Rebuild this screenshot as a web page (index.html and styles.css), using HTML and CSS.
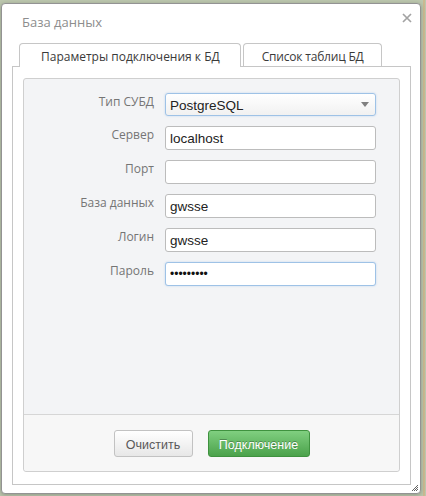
FILE: index.html
```html
<!DOCTYPE html>
<html lang="ru">
<head>
<meta charset="utf-8">
<title>База данных</title>
<link rel="stylesheet" href="styles.css">
</head>
<body>
<div class="dialog">
  <div class="dialog-header">
    <div class="dialog-title">База данных</div>
    <svg class="close" width="10" height="10" viewBox="0 0 10 10"><path d="M1 1L9 9M9 1L1 9" stroke="#a3a3a3" stroke-width="1.7" fill="none"/></svg>
  </div>
  <div class="tabs">
    <div class="tab active">Параметры подключения к БД</div>
    <div class="tab narrow">Список таблиц БД</div>
  </div>
  <div class="tab-panel">
    <div class="box">
      <div class="form">
        <label class="label">Тип СУБД</label>
        <div class="field select focused"><span>PostgreSQL</span><svg width="8" height="5" viewBox="0 0 8 5"><path d="M0 0H8L4 5Z" fill="#808080"/></svg></div>
        <label class="label">Сервер</label>
        <input class="field" type="text" value="localhost">
        <label class="label">Порт</label>
        <input class="field" type="text" value="">
        <label class="label">База данных</label>
        <input class="field" type="text" value="gwsse">
        <label class="label">Логин</label>
        <input class="field" type="text" value="gwsse">
        <label class="label">Пароль</label>
        <input class="field password focused" type="password" value="123456789">
      </div>
      <div class="footer">
        <button class="btn btn-default">Очистить</button>
        <button class="btn btn-success">Подключение</button>
      </div>
    </div>
  </div>
  <svg class="grip" width="8" height="8" viewBox="0 0 8 8"><path d="M7 1L1 7M7 3L3 7M7 5L5 7" stroke="#666" stroke-width="1" fill="none"/></svg>
</div>
</body>
</html>
```
FILE: styles.css
```css
html, body {
  margin: 0;
  padding: 0;
}
body {
  width: 426px;
  height: 496px;
  overflow: hidden;
  background:
    linear-gradient(90deg, rgba(230,160,90,0.35) 0 2px, transparent 2px 100%) 423px 0 / 3px 496px no-repeat,
    #bcc7ae;
  font-family: "Open Sans", "DejaVu Sans", sans-serif;
}
.dialog {
  position: relative;
  box-sizing: border-box;
  width: 420px;
  height: 491px;
  margin: 3px 0 0 1px;
  background: #fff;
  border: 1px solid #939393;
  border-radius: 4px;
  box-shadow: 0 1px 4px rgba(0,0,0,0.25);
  display: flex;
  flex-direction: column;
}
.dialog-header {
  height: 39px;
  box-sizing: border-box;
  display: flex;
  justify-content: space-between;
  align-items: flex-start;
  padding: 0 8px 0 20px;
}
.dialog-title {
  padding-top: 9px;
  font-size: 13px;
  line-height: 18px;
  color: #8d8d8d;
}
.close {
  margin-top: 9px;
}
.tabs {
  display: flex;
  align-items: flex-end;
  gap: 2px;
  margin: 0 10px;
  padding-left: 7px;
  height: 23px;
}
.tab {
  box-sizing: border-box;
  height: 23px;
  padding: 3px 21px 0;
  line-height: 19px;
  font-size: 12px;
  color: #3a3a3a;
  background: #fff;
  border: 1px solid #c6c6c6;
  border-bottom: none;
  border-radius: 4px 4px 0 0;
}
.tab.narrow {
  padding-left: 18px;
  padding-right: 17px;
  letter-spacing: -0.2px;
}
.tab.active {
  position: relative;
  z-index: 1;
  height: 24px;
  margin-bottom: -1px;
  padding-left: 21px;
  padding-right: 20px;
}
.tab-panel {
  flex: 1;
  margin: 0 9px 8px 10px;
  border: 1px solid #c6c6c6;
  display: flex;
  flex-direction: column;
}
.box {
  flex: 1;
  margin: 11px 10px 12px 10px;
  border: 1px solid #cfcfcf;
  border-radius: 3px;
  background: #f3f4f6;
  display: flex;
  flex-direction: column;
}
.form {
  flex: 1;
  display: grid;
  grid-template-columns: 130px 211px;
  column-gap: 11px;
  row-gap: 10px;
  align-content: start;
  padding-top: 14px;
}
.label {
  text-align: right;
  font-size: 12px;
  line-height: 16px;
  padding-top: 1px;
  color: #757575;
}
.field {
  box-sizing: border-box;
  height: 24px;
  width: 211px;
  margin: 0;
  padding: 0 4px;
  border: 1px solid #bcbcbc;
  border-radius: 3px;
  background: #fff;
  font-family: "Liberation Sans", Arial, sans-serif;
  font-size: 13.5px;
  color: #222;
  outline: none;
}
.select {
  height: 23px;
  display: flex;
  align-items: center;
  justify-content: space-between;
  padding: 0 6px 0 4px;
  background: linear-gradient(#ffffff, #f1f1f1);
}
.select span {
  padding-top: 1px;
}
.focused {
  border-color: #9ec2e6;
  box-shadow: 0 0 2px rgba(120,170,230,0.45);
}
.password {
  font-size: 12px;
  color: #111;
}
.footer {
  border-top: 1px solid #d6d6d6;
  background: #f7f7f7;
  border-radius: 0 0 3px 3px;
  display: flex;
  justify-content: center;
  gap: 15px;
  padding: 15px 0 14px;
}
.btn {
  box-sizing: border-box;
  height: 27px;
  padding: 2px 0 0;
  border-radius: 3px;
  font-family: "Liberation Sans", Arial, sans-serif;
  font-size: 12.5px;
  cursor: pointer;
}
.btn-default {
  width: 79px;
  color: #595959;
  background: linear-gradient(#ffffff, #e7e7e7);
  border: 1px solid #c2c2c2;
}
.btn-success {
  width: 102px;
  color: #fff;
  background: linear-gradient(#80cf80, #4ba24b);
  border: 1px solid #3f923f;
  text-shadow: 0 -1px 0 rgba(0,0,0,0.3);
}
.grip {
  position: absolute;
  right: 1px;
  bottom: 1px;
}
```
